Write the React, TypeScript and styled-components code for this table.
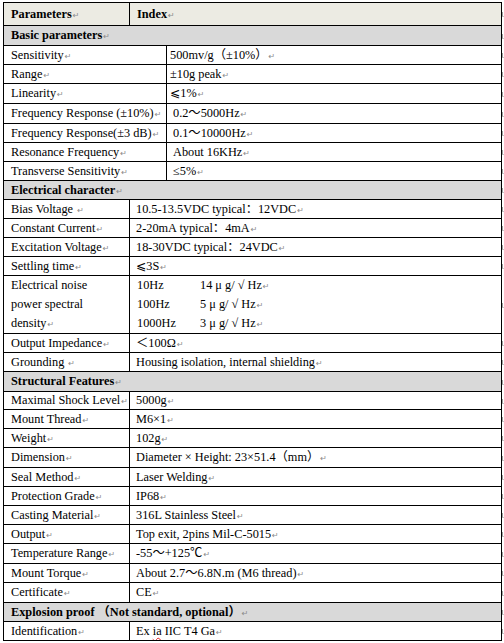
import React from 'react';
import styled, { createGlobalStyle } from 'styled-components';

const GlobalStyle = createGlobalStyle`
  html, body { margin: 0; padding: 0; background: #ffffff; overflow: hidden; }
  body {
    font-family: "Liberation Serif", "Noto Sans CJK SC", "DejaVu Sans", serif;
    font-size: 12.3px;
    color: #000;
  }
`;

const Page = styled.div`
  padding: 2px 0 0 3px;
  display: flex;
  flex-direction: column;
`;

const Row = styled.div`
  display: flex;
  align-items: stretch;
`;

const Cells = styled.div<{ $cols: string; $h: number; $bg: string; $first?: boolean }>`
  box-sizing: border-box;
  flex: none;
  width: 499px;
  height: ${(p) => p.$h}px;
  display: grid;
  grid-template-columns: ${(p) => p.$cols};
  border: 1px solid #000;
  border-top-width: ${(p) => (p.$first ? 1 : 0)}px;
  background: ${(p) => p.$bg};
`;

const Cell = styled.div<{ $pad: number; $divider?: boolean; $bold?: boolean }>`
  display: flex;
  align-items: center;
  padding-left: ${(p) => p.$pad}px;
  border-left: ${(p) => (p.$divider ? '1px solid #000' : 'none')};
  font-weight: ${(p) => (p.$bold ? 700 : 400)};
  white-space: pre;
  overflow: hidden;
  line-height: 1;
`;

const Text = styled.span`
  white-space: pre;
`;

const StackCell = styled.div<{ $pad: number; $divider?: boolean }>`
  display: flex;
  flex-direction: column;
  padding-left: ${(p) => p.$pad}px;
  border-left: ${(p) => (p.$divider ? '1px solid #000' : 'none')};
  white-space: pre;
`;

const Line = styled.div`
  height: 19px;
  display: flex;
  align-items: center;
`;

const NoiseLine = styled.div`
  height: 19px;
  display: grid;
  grid-template-columns: 63px auto;
  align-items: center;
`;

const Mark = styled.span`
  font-family: "DejaVu Sans", sans-serif;
  font-weight: 400;
  font-size: 8px;
  color: #8a8a8a;
  margin-left: 1px;
`;

const EndMark = styled.span`
  align-self: center;
  flex: none;
  width: 2px;
  height: 5px;
  border-left: 1px solid #a0a0a0;
  border-bottom: 1px solid #c8c8c8;
  box-sizing: border-box;
`;

const Wavy = styled.span`
  text-decoration: underline wavy #e02020;
  text-decoration-thickness: 1px;
  text-underline-offset: 2px;
`;

type Item = {
  label: React.ReactNode;
  value: React.ReactNode;
  h: number;
  pad?: number;
};

type Section = {
  title: React.ReactNode;
  titleH: number;
  split: number;
  rows: Item[];
};

const M = () => <Mark>↵</Mark>;

const sections: Section[] = [
  {
    title: 'Basic parameters',
    titleH: 20,
    split: 162,
    rows: [
      { label: 'Sensitivity', value: '500mv/g（±10%）', h: 19, pad: 3 },
      { label: 'Range', value: '±10g peak', h: 19, pad: 3 },
      { label: 'Linearity', value: '⩽1%', h: 20, pad: 3 },
      { label: 'Frequency Response (±10%)', value: '0.2～5000Hz', h: 20 },
      { label: 'Frequency Response(±3 dB)', value: '0.1～10000Hz', h: 19 },
      { label: 'Resonance Frequency', value: 'About 16KHz', h: 19 },
      { label: 'Transverse Sensitivity', value: '≤5%', h: 19 },
    ],
  },
  {
    title: 'Electrical character',
    titleH: 19,
    split: 125,
    rows: [
      { label: 'Bias Voltage ', value: '10.5-13.5VDC typical：12VDC', h: 19 },
      { label: 'Constant Current', value: '2-20mA typical：4mA', h: 19 },
      { label: 'Excitation Voltage', value: '18-30VDC typical：24VDC', h: 19 },
      { label: 'Settling time', value: '⩽3S', h: 19 },
      { label: 'NOISE', value: null, h: 58 },
      { label: 'Output Impedance', value: '＜100Ω', h: 19 },
      { label: 'Grounding ', value: 'Housing isolation, internal shielding', h: 19 },
    ],
  },
  {
    title: 'Structural Features',
    titleH: 20,
    split: 125,
    rows: [
      { label: 'Maximal Shock Level', value: '5000g', h: 18 },
      { label: 'Mount Thread', value: 'M6×1', h: 19 },
      { label: 'Weight', value: '102g', h: 19 },
      { label: 'Dimension', value: 'Diameter × Height: 23×51.4（mm）', h: 20 },
      { label: 'Seal Method', value: 'Laser Welding', h: 19 },
      { label: 'Protection Grade', value: 'IP68', h: 19 },
      { label: 'Casting Material', value: '316L Stainless Steel', h: 19 },
      { label: 'Output', value: 'Top exit, 2pins Mil-C-5015', h: 19 },
      { label: 'Temperature Range', value: '-55～+125℃', h: 20 },
      { label: 'Mount Torque', value: 'About 2.7～6.8N.m (M6 thread)', h: 19 },
      { label: 'Certificate', value: 'CE', h: 20 },
    ],
  },
  {
    title: 'Explosion proof （Not standard, optional）',
    titleH: 19,
    split: 125,
    rows: [
      {
        label: 'Identification',
        value: (
          <>
            {'Ex '}
            <Wavy>ia</Wavy>
            {' IIC T4 Ga'}
          </>
        ),
        h: 19,
      },
    ],
  },
];

const noise = [
  ['10Hz', '14 μ g/ √ Hz'],
  ['100Hz', '5 μ g/ √ Hz'],
  ['1000Hz', '3 μ g/ √ Hz'],
];

const NoiseRow: React.FC<{ split: number }> = ({ split }) => (
  <Row>
    <Cells $cols={`${split}px 1fr`} $h={58} $bg="#ffffff">
      <StackCell $pad={7}>
        <Line>
          <Text>Electrical noise</Text>
        </Line>
        <Line>
          <Text>power spectral</Text>
        </Line>
        <Line>
          <Text>
            density
            <M />
          </Text>
        </Line>
      </StackCell>
      <StackCell $pad={7} $divider>
        {noise.map(([f, v]) => (
          <NoiseLine key={f}>
            <Text>{f}</Text>
            <Text>
              {v}
              <M />
            </Text>
          </NoiseLine>
        ))}
      </StackCell>
    </Cells>
    <EndMark />
  </Row>
);

export default function App() {
  return (
    <>
      <GlobalStyle />
      <Page>
        <Row>
          <Cells $cols="125px 1fr" $h={24} $bg="#ecebe3" $first>
            <Cell $pad={7} $bold>
              <Text>
                Parameters
                <M />
              </Text>
            </Cell>
            <Cell $pad={7} $divider $bold>
              <Text>
                Index
                <M />
              </Text>
            </Cell>
          </Cells>
          <EndMark />
        </Row>
        {sections.map((s, si) => (
          <React.Fragment key={si}>
            <Row>
              <Cells $cols="1fr" $h={s.titleH} $bg="#d9d9d9">
                <Cell $pad={7} $bold>
                  <Text>
                    {s.title}
                    <M />
                  </Text>
                </Cell>
              </Cells>
              <EndMark />
            </Row>
            {s.rows.map((r, ri) =>
              r.label === 'NOISE' ? (
                <NoiseRow key={ri} split={s.split} />
              ) : (
                <Row key={ri}>
                  <Cells $cols={`${s.split}px 1fr`} $h={r.h} $bg="#ffffff">
                    <Cell $pad={7}>
                      <Text>
                        {r.label}
                        <M />
                      </Text>
                    </Cell>
                    <Cell $pad={r.pad ?? 6} $divider>
                      <Text>
                        {r.value}
                        <M />
                      </Text>
                    </Cell>
                  </Cells>
                  <EndMark />
                </Row>
              )
            )}
          </React.Fragment>
        ))}
      </Page>
    </>
  );
}
